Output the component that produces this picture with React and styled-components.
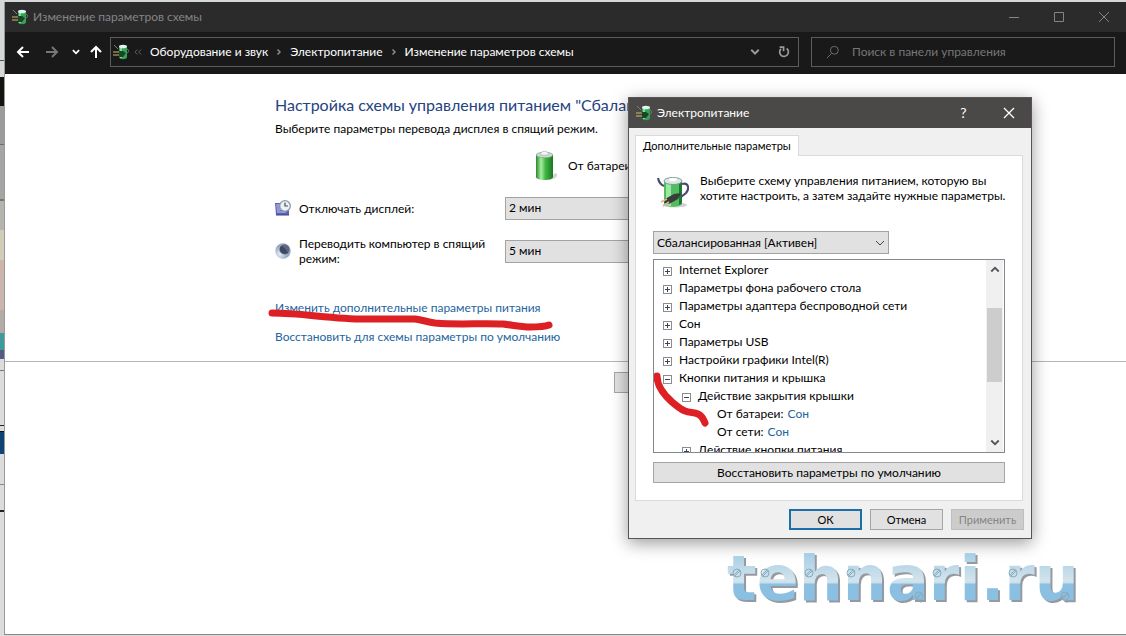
import styled, { createGlobalStyle } from "styled-components";

const GlobalStyle = createGlobalStyle`
    * {
        box-sizing: border-box;
    }

    body {
        margin: 0;
        background: #cfd1d1;
        color: #000;
        font-family: Lato, "Open Sans", sans-serif;
        font-size: 12px;
        line-height: 16px;
    }

    button, select, input {
        font-family: inherit;
        font-size: inherit;
        line-height: inherit;
        color: inherit;
    }

    svg {
        display: block;
        flex: none;
    }
`

const Desktop = styled.div`
    position: relative;
    display: flex;
    min-height: 100vh;
    padding: 2px 0 1px 4px;
    overflow: hidden;
    background: linear-gradient(
        #d4d8d8 0 60px, #555 60px 61px, #d4d8d8 61px 77px,
        #15130f 77px 106px, #9b9b99 106px 144px, #6b6b69 144px 145px,
        #a5a5a3 145px 199px, #777 199px 201px, #b5b5ad 201px 230px,
        #d0cdb9 230px 260px, #cbb5ac 260px 310px, #b4aaa6 310px 333px,
        #3f9a9c 333px 350px, #545a82 350px 359px, #dcdcdc 359px 370px,
        #777 370px 371px, #dcdcdc 371px 425px, #222 425px 426px,
        #dcdcdc 426px 431px, #111 431px 432px, #0f4375 432px 454px,
        #dcdcdc 454px 484px, #888 484px 485px, #dcdcdc 485px 510px,
        #222 510px 512px, #dcdcdc 512px
    );
`

const Window = styled.main`
    display: flex;
    flex: 1;
    flex-direction: column;
    min-width: 0;
    background: #fff;
    border-left: 1px solid #999;
    border-bottom: 1px solid #858585;
`

const TitleBar = styled.header`
    display: flex;
    align-items: center;
    height: 30px;
    padding-left: 7px;
    background: #2b2b2b;
    color: #858585;
`

const Title = styled.h1`
    flex: 1;
    margin: 0 0 0 5px;
    font-size: 12px;
    font-weight: 400;
`

const CaptionButton = styled.button`
    display: flex;
    align-items: center;
    justify-content: center;
    width: 45px;
    height: 30px;
    padding: 0;
    border: 0;
    background: none;
    font-size: 14px;
`

const NavBar = styled.nav`
    display: flex;
    align-items: center;
    height: 42px;
    padding: 0 11px 2px 8px;
    gap: 12px;
    background: #191919;
    color: #fff;
`

const NavButtons = styled.div`
    display: flex;
    align-items: center;
    gap: 3px;
    margin-right: -10px;
`

const IconButton = styled.button`
    display: flex;
    align-items: center;
    justify-content: center;
    width: ${({$width}) => $width || 20}px;
    height: 24px;
    padding: 0;
    border: 0;
    background: none;
    color: ${({$color}) => $color || "#fff"};
`

const AddressBar = styled.div`
    display: flex;
    flex: 1;
    align-items: center;
    min-width: 0;
    height: 30px;
    padding: 0 4px 0 2px;
    border: 1px solid #5c5c5c;
`

const Crumbs = styled.div`
    display: flex;
    flex: 1;
    align-items: center;
    gap: 7px;
    margin-left: 4px;
    white-space: nowrap;
    color: #8a8a8a;

    a {
        color: #fff;
        text-decoration: none;
    }
`

const SearchBox = styled.label`
    display: flex;
    flex: 0 1 304px;
    align-items: center;
    height: 30px;
    gap: 12px;
    padding-left: 14px;
    border: 1px solid #5c5c5c;
    color: #777;

    input {
        flex: 1;
        min-width: 0;
        padding: 0;
        border: 0;
        outline: 0;
        background: none;
    }

    input::placeholder {
        color: #777;
        opacity: 1;
    }
`

const Content = styled.section`
    padding: 20px 0 16px 270px;
    border-bottom: 1px solid #b5b5b5;
`

const Heading = styled.h2`
    margin: 0 0 5px;
    color: #24437f;
    font-size: 16px;
    font-weight: 400;
    line-height: 22px;
    white-space: nowrap;
`

const Lead = styled.p`
    margin: 0;
`

const Settings = styled.div`
    display: grid;
    grid-template-columns: 16px 198px 150px;
    grid-template-rows: 32px 24px 34px;
    column-gap: 8px;
    row-gap: 14px;
    align-items: center;
    margin-top: 13px;
`

const SourceLabel = styled.div`
    grid-column: 3;
    display: flex;
    align-items: center;
    gap: 10px;
    padding-left: 31px;
    white-space: nowrap;
`

const SettingLabel = styled.label`
    line-height: 15px;
`

const SelectBox = styled.div`
    display: grid;
    align-items: center;
    width: ${({$width}) => $width};
    height: 23px;
    background: #e1e1e1;
    border: 1px solid #a3a3a3;

    select, svg {
        grid-area: 1 / 1;
    }

    select {
        appearance: none;
        width: 100%;
        height: 21px;
        padding: 0 4px 0 3px;
        border: 0;
        border-radius: 0;
        background: none;
    }

    svg {
        justify-self: end;
        pointer-events: none;
        color: #444;
    }
`

const Links = styled.div`
    display: flex;
    flex-direction: column;
    align-items: flex-start;
    gap: 13px;
    margin-top: 32px;
`

const Link = styled.a`
    position: relative;
    color: #23659f;
    text-decoration: none;
`

const Marker = styled.svg`
    position: absolute;
    left: ${({$left}) => $left}px;
    top: ${({$top}) => $top}px;
    fill: none;
    stroke: #dc2024;
    stroke-width: 7;
    stroke-linecap: round;
    stroke-linejoin: round;
    pointer-events: none;
`

const Footer = styled.footer`
    padding: 10px 0 0 609px;
`

const PushButton = styled.button`
    width: ${({$width}) => $width || "73px"};
    height: 21px;
    padding: 0;
    line-height: 17px;
    border: ${({$primary}) => $primary ? "2px solid #1c6ea8" : "1px solid #a5a5a5"};
    background: #e1e1e1;

    &:disabled {
        background: #ccc;
        border-color: #bfbfbf;
        color: #858585;
    }
`

const Dialog = styled.section`
    position: absolute;
    left: 628px;
    top: 97px;
    width: 404px;
    background: #f0f0f0;
    border: 1px solid #555;
    box-shadow: 0 4px 16px rgba(0, 0, 0, 0.4);
`

const DialogBar = styled.header`
    display: flex;
    align-items: center;
    height: 30px;
    padding-left: 7px;
    background: #4a4947;
    color: #fff;
`

const DialogBody = styled.div`
    padding: 7px 7px 8px 6px;
`

const Tab = styled.button`
    display: block;
    position: relative;
    height: 21px;
    margin-bottom: -1px;
    padding: 0 7px;
    border: 1px solid #dadada;
    border-bottom: 0;
    background: #fff;
    font-size: 11px;
`

const Panel = styled.div`
    margin-right: 1px;
    padding: 17px;
    border: 1px solid #dadada;
    background: #fff;
`

const Intro = styled.div`
    display: flex;
    gap: 11px;
    padding: 0 0 23px 4px;

    p {
        margin: 0;
        line-height: 15px;
        white-space: nowrap;
    }

    svg {
        margin-top: 3px;
    }
`

const TreeFrame = styled.div`
    display: flex;
    height: 194px;
    margin: 5px 0 9px;
    padding-right: 1px;
    border: 1px solid #828790;
`

const Tree = styled.ul`
    position: relative;
    flex: 1;
    margin: 0;
    padding: 1px 0 0 9px;
    overflow: hidden;
    list-style: none;
`

const TreeRow = styled.li`
    display: flex;
    align-items: center;
    height: 18px;
    gap: 7px;
    padding-left: ${({$level}) => $level * 19}px;
    white-space: nowrap;
`

const ValueRow = styled(TreeRow)`
    gap: 4px;
    padding-left: 54px;
`

const Expander = styled.button`
    width: 9px;
    height: 9px;
    margin-top: 2px;
    padding: 0;
    border: 0;
    background: none;
`

const ScrollBar = styled.div`
    display: flex;
    flex-direction: column;
    width: 17px;
    background: #f0f0f0;

    button {
        height: 20px;
    }
`

const Thumb = styled.div`
    height: 74px;
    margin: 28px 1px auto;
    background: #cdcdcd;
`

const Actions = styled.div`
    display: flex;
    justify-content: flex-end;
    gap: 8px;
    padding-top: 8px;
    font-size: 11px;
`

const Watermark = styled.div`
    position: absolute;
    left: 727px;
    top: 543px;
    font-family: "DejaVu Sans", sans-serif;
    font-size: 62px;
    font-weight: 700;
    line-height: 72px;
    color: transparent;
    background: linear-gradient(#a9cfe6 12px, #d3e4ec 38px, #c5dfed 40px, #8bc0e2 41px, #8bbfe0);
    background-clip: text;
    filter: drop-shadow(2px 2px 0 #96999f);

    svg {
        position: absolute;
        left: 0;
        top: 0;
    }
`

const PowerIcon = ({size = 16}) => (
    <svg width={size} height={size} viewBox="0 0 32 32" fill="none">
        <ellipse cx="18" cy="29" rx="12" ry="2.5" fill="#777" opacity="0.35"/>
        <path d="M7 5v22c0 5 18 5 18 0V5z" fill="#4fbd60"/>
        <path d="M9 7v22c2 1 4 1 5 1V7z" fill="#9be8a3"/>
        <path d="M22 7v22c2-1 3-1 3-3V6z" fill="#1d7a33"/>
        <ellipse cx="16" cy="5" rx="9" ry="3.5" fill="#d9e8e4" stroke="#829993"/>
        <ellipse cx="16" cy="3.5" rx="4" ry="1.8" fill="#fff"/>
        <path d="M1 2c1 5 3 7 6 8M25 8c6-2 8 4 4 9l-5 4" stroke="#474c69" strokeWidth="2.2"/>
        <path d="M8 23l9-5 7-1-3 6-9 5-5-1z" fill="#3b3c39"/>
        <path d="M10 23l-6 3M12 26l-6 4" stroke="#d9b48f" strokeWidth="1.6"/>
    </svg>
)

const PlugIcon = () => (
    <svg width="16" height="16" viewBox="0 0 16 16" fill="none">
        <path d="M6 2h8v11c0 3-8 3-8 0z" fill="#33a552"/>
        <path d="M7 4h2v10H7z" fill="#85d796"/>
        <ellipse cx="10" cy="2.5" rx="4" ry="1.8" fill="#e3f5ee"/>
        <path d="M1 1l4 4M14 5c3 1 1 4-1 5" stroke="#777e86"/>
        <path d="M5 7h5l3 2-3 4H6z" fill="#1d4429"/>
        <path d="M0 8h6M0 11h6" stroke="#d1bb6c"/>
    </svg>
)

const BatteryIcon = () => (
    <svg width="22" height="32" viewBox="0 0 22 32">
        <defs>
            <linearGradient id="cell">
                <stop offset="0" stopColor="#26872b"/>
                <stop offset="0.3" stopColor="#a8efa0"/>
                <stop offset="0.55" stopColor="#43b747"/>
                <stop offset="1" stopColor="#167a1d"/>
            </linearGradient>
        </defs>
        <path d="M13 27l7-4c3 3 0 6-8 7z" fill="#aaa" opacity="0.5"/>
        <path d="M0 5v22c0 4 17 4 17 0V5z" fill="url(#cell)"/>
        <ellipse cx="8.5" cy="5" rx="8.3" ry="2.8" fill="#c8ded0" stroke="#839b8a" strokeWidth="0.7"/>
        <path d="M4.5 5c0-5 8-5 8 0z" fill="#f4f7f5" stroke="#a2aca6" strokeWidth="0.6"/>
    </svg>
)

const DisplayIcon = () => (
    <svg width="16" height="16" viewBox="0 0 16 16" fill="none">
        <path d="M0 3h5v7h9v5H1z" fill="#5b62b5"/>
        <path d="M1 4h4v7h6v2H2z" fill="#8f98dc"/>
        <path d="M1 15h13" stroke="#3e4386"/>
        <circle cx="10" cy="6" r="5.3" fill="#eef2f5" stroke="#8b99a6" strokeWidth="1.3"/>
        <path d="M10 2.5V6h3" stroke="#3d5063" strokeWidth="1.2"/>
    </svg>
)

const MoonIcon = () => (
    <svg width="16" height="16" viewBox="0 0 16 16">
        <defs>
            <radialGradient id="moon" cx="0.3" cy="0.7">
                <stop offset="0" stopColor="#e4ecf6"/>
                <stop offset="1" stopColor="#93a8c4"/>
            </radialGradient>
        </defs>
        <circle cx="8" cy="8" r="7.7" fill="url(#moon)"/>
        <circle cx="9.5" cy="6.5" r="5" fill="#5c6780"/>
        <path d="M6 3c2 0 4 2 7 7-4 2-9-1-8-5z" fill="#3f485e"/>
    </svg>
)

const Glyph = ({d, size = 16, width = 1}) => (
    <svg width={size} height={size} viewBox="0 0 16 16" fill="none" stroke="currentColor" strokeWidth={width}>
        <path d={d}/>
    </svg>
)

const Screw = ({x, y}) => (
    <g transform={`translate(${x} ${y})`}>
        <circle r="4"/>
        <path d="M-3 2l5-5M-2 3l5-5"/>
    </g>
)

const treeRows = [
    {text: "Internet Explorer", level: 0, sign: "+"},
    {text: "Параметры фона рабочего стола", level: 0, sign: "+"},
    {text: "Параметры адаптера беспроводной сети", level: 0, sign: "+"},
    {text: "Сон", level: 0, sign: "+"},
    {text: "Параметры USB", level: 0, sign: "+"},
    {text: "Настройки графики Intel(R)", level: 0, sign: "+"},
    {text: "Кнопки питания и крышка", level: 0, sign: "-"},
    {text: "Действие закрытия крышки", level: 1, sign: "-"},
    {text: "От батареи:", value: "Сон"},
    {text: "От сети:", value: "Сон"},
    {text: "Действие кнопки питания", level: 1, sign: "+"},
]

const screws = [[10, 30], [38, 30], [82, 30], [124, 30], [192, 53], [210, 30], [286, 30], [338, 53]]

const PowerDialog = () => {
    return (
        <Dialog role="dialog" aria-label="Электропитание">
            <DialogBar>
                <PlugIcon/>
                <Title as="h2">Электропитание</Title>
                <CaptionButton>?</CaptionButton>
                <CaptionButton aria-label="Закрыть">
                    <Glyph d="M3 3l10 10M13 3L3 13" width={1.3}/>
                </CaptionButton>
            </DialogBar>
            <DialogBody>
                <Tab>Дополнительные параметры</Tab>
                <Panel>
                    <Intro>
                        <PowerIcon size={32}/>
                        <p>
                            Выберите схему управления питанием, которую вы<br/>
                            хотите настроить, а затем задайте нужные параметры.
                        </p>
                    </Intro>
                    <SelectBox $width="236px">
                        <select aria-label="Схема питания">
                            <option>Сбалансированная [Активен]</option>
                        </select>
                        <Glyph d="M4 6l4 4 4-4" size={16}/>
                    </SelectBox>
                    <TreeFrame>
                        <Tree>
                            {treeRows.map(({text, level, sign, value}) => value ? (
                                <ValueRow key={text}>
                                    <span>{text}</span>
                                    <Link href="#">{value}</Link>
                                </ValueRow>
                            ) : (
                                <TreeRow key={text} $level={level}>
                                    <Expander aria-label={text}>
                                        <svg width="9" height="9" viewBox="0 0 9 9" fill="none">
                                            <rect x="0.5" y="0.5" width="8" height="8" stroke="#8c8c8c"/>
                                            <path d={sign === "+" ? "M2 4.5h5M4.5 2v5" : "M2 4.5h5"} stroke="#34475e"/>
                                        </svg>
                                    </Expander>
                                    <span>{text}</span>
                                </TreeRow>
                            ))}
                            <Marker $left={-2} $top={112} width="60" height="60">
                                <path d="M5 4c0 11 7 19 15 26 5 4 8 7 13 9 5 2 9 1 13 3 5 2 5 5 7 9"/>
                            </Marker>
                        </Tree>
                        <ScrollBar>
                            <IconButton $width={17} $color="#555" aria-label="Вверх">
                                <Glyph d="M3 10l5-5 5 5" size={12} width={2.4}/>
                            </IconButton>
                            <Thumb/>
                            <IconButton $width={17} $color="#555" aria-label="Вниз">
                                <Glyph d="M3 6l5 5 5-5" size={12} width={2.4}/>
                            </IconButton>
                        </ScrollBar>
                    </TreeFrame>
                    <PushButton $width="100%">Восстановить параметры по умолчанию</PushButton>
                </Panel>
                <Actions>
                    <PushButton $primary>ОК</PushButton>
                    <PushButton>Отмена</PushButton>
                    <PushButton disabled>Применить</PushButton>
                </Actions>
            </DialogBody>
        </Dialog>
    )
}

const App = () => {
    return (
        <Desktop>
            <GlobalStyle/>
            <Window>
                <TitleBar>
                    <PlugIcon/>
                    <Title>Изменение параметров схемы</Title>
                    <CaptionButton aria-label="Свернуть"><Glyph d="M3 8.5h10"/></CaptionButton>
                    <CaptionButton aria-label="Развернуть"><Glyph d="M3.5 3.5h9v9h-9z"/></CaptionButton>
                    <CaptionButton aria-label="Закрыть"><Glyph d="M3 3l10 10M13 3L3 13"/></CaptionButton>
                </TitleBar>
                <NavBar>
                    <NavButtons>
                        <IconButton aria-label="Назад"><Glyph d="M14 8H3M8 3L3 8l5 5" width={2}/></IconButton>
                        <IconButton $width={32} $color="#777" aria-label="Вперёд"><Glyph d="M2 8h11M8 3l5 5-5 5" width={2}/></IconButton>
                        <IconButton $width={10} aria-label="Недавние"><Glyph d="M3 5l5 5 5-5" size={10} width={2.8}/></IconButton>
                        <IconButton $width={24} aria-label="Вверх"><Glyph d="M8 14V3M3 8l5-5 5 5" width={2}/></IconButton>
                    </NavButtons>
                    <AddressBar>
                        <PlugIcon/>
                        <Crumbs>
                            <Glyph d="M7 4L3 8l4 4M13 4L9 8l4 4" size={10}/>
                            <a href="#">Оборудование и звук</a>
                            <Glyph d="M5 3l5 5-5 5" size={8} width={3}/>
                            <a href="#">Электропитание</a>
                            <Glyph d="M5 3l5 5-5 5" size={8} width={3}/>
                            <a href="#">Изменение параметров схемы</a>
                        </Crumbs>
                        <IconButton $width={38} $color="#999" aria-label="Адреса"><Glyph d="M3 5l5 5 5-5" size={12} width={2.6}/></IconButton>
                        <IconButton $color="#999" aria-label="Обновить">
                            <Glyph d="M11 4a5 5 0 1 1-6.5 0.5M3 2.5h4.5V7" size={14} width={2}/>
                        </IconButton>
                    </AddressBar>
                    <SearchBox>
                        <Glyph d="M6 10l-5 5M9.5 1.5a4.5 4.5 0 1 1 0 9 4.5 4.5 0 0 1 0-9z" size={14}/>
                        <input type="text" placeholder="Поиск в панели управления" aria-label="Поиск в панели управления"/>
                    </SearchBox>
                </NavBar>
                <Content>
                    <Heading>Настройка схемы управления питанием "Сбалансированная"</Heading>
                    <Lead>Выберите параметры перевода дисплея в спящий режим.</Lead>
                    <Settings>
                        <SourceLabel>
                            <BatteryIcon/>
                            От батареи
                        </SourceLabel>
                        <DisplayIcon/>
                        <SettingLabel htmlFor="display">Отключать дисплей:</SettingLabel>
                        <SelectBox $width="100%">
                            <select id="display"><option>2 мин</option></select>
                        </SelectBox>
                        <MoonIcon/>
                        <SettingLabel htmlFor="sleep">Переводить компьютер в спящий режим:</SettingLabel>
                        <SelectBox $width="100%">
                            <select id="sleep"><option>5 мин</option></select>
                        </SelectBox>
                    </Settings>
                    <Links>
                        <Link href="#">
                            Изменить дополнительные параметры питания
                            <Marker $left={-8} $top={2} width="290" height="32">
                                <path d="M5 11c30 0 60 6 93 6h50c8 1 12 3 20 4 22 2 46 0 68 1 9 1 18 3 27 3 8 0 14 0 19-2"/>
                            </Marker>
                        </Link>
                        <Link href="#">Восстановить для схемы параметры по умолчанию</Link>
                    </Links>
                </Content>
                <Footer>
                    <PushButton $width="168px">Сохранить изменения</PushButton>
                </Footer>
            </Window>
            <PowerDialog/>
            <Watermark>
                tehnari.ru
                <svg width="350" height="72" fill="none" stroke="#87abbc" strokeWidth="1">
                    {screws.map(([x, y]) => <Screw key={x} x={x} y={y}/>)}
                </svg>
            </Watermark>
        </Desktop>
    )
}

export default App;
